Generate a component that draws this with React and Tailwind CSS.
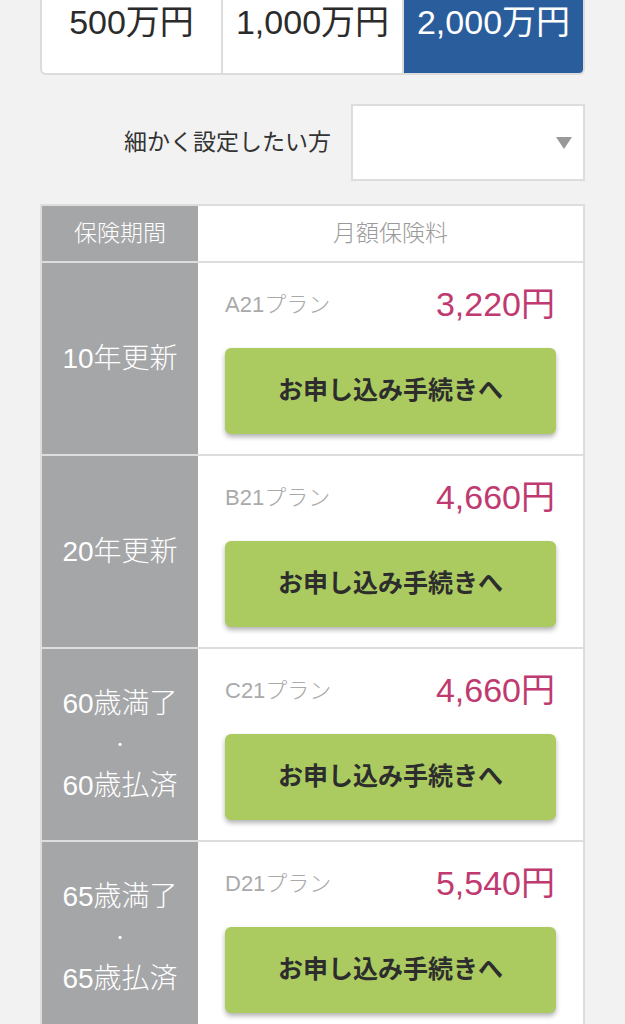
const FONT = "font-['Liberation_Sans','Noto_Sans_CJK_JP',sans-serif]"

const AMOUNTS = [
  { label: '500万円', active: false },
  { label: '1,000万円', active: false },
  { label: '2,000万円', active: true },
]

const PLANS = [
  { term: ['10年更新'], plan: 'A21プラン', price: '3,220円' },
  { term: ['20年更新'], plan: 'B21プラン', price: '4,660円' },
  { term: ['60歳満了', '・', '60歳払済'], plan: 'C21プラン', price: '4,660円' },
  { term: ['65歳満了', '・', '65歳払済'], plan: 'D21プラン', price: '5,540円' },
]

function PlanRow({ row }) {
  return (
    <div className="flex h-[193px] border-t-2 border-[#dddddd]">
      <div className="w-[156px] shrink-0 bg-[#a5a6a8] flex flex-col items-center justify-center text-white text-[28px] leading-[41px] font-light">
        {row.term.map((t, i) => (
          <span key={i} className={t === '・' ? 'text-[16px]' : ''}>{t}</span>
        ))}
      </div>
      <div className="flex-1 bg-white px-[27px] pt-[22px]">
        <div className="flex items-center justify-between h-[38px]">
          <span className="text-[22px] font-light text-[#aaaaaa]">{row.plan}</span>
          <span className="text-[34px] text-[#bf3a70] pr-[1px]">{row.price}</span>
        </div>
        <button className="mt-[25px] w-full h-[86px] rounded-[6px] bg-[#abcb61] shadow-[0_3px_5px_rgba(0,0,0,0.3)] text-[25px] font-bold text-[#2d2d2d]">
          お申し込み手続きへ
        </button>
      </div>
    </div>
  )
}

export default function App() {
  return (
    <div className={`min-h-[1024px] bg-[#f2f2f2] ${FONT}`}>
      <div className="mx-[40px]">
        {/* Amount selector */}
        <div className="flex h-[75px] rounded-b-[6px] overflow-hidden border-x-2 border-b-2 border-[#dcdcdc] bg-white">
          {AMOUNTS.map((a, i) => (
            <div
              key={a.label}
              className={`flex-1 flex justify-center pt-[1px] text-[34px] leading-[42px] ${i > 0 ? 'border-l-2 border-[#dcdcdc]' : ''} ${a.active ? 'bg-[#2a5d9c] text-white' : 'text-[#2b2b2b]'}`}
            >
              {a.label}
            </div>
          ))}
        </div>

        {/* Fine settings */}
        <div className="flex items-center justify-end mt-[29px] gap-[20px]">
          <span className="text-[23px] text-[#333333]">細かく設定したい方</span>
          <div className="w-[234px] h-[77px] bg-white border-2 border-[#dddddd] flex items-center justify-end pr-[10px]">
            <svg width="18" height="14" viewBox="0 0 18 14">
              <path d="M1 1h16L9 13z" fill="#999999" />
            </svg>
          </div>
        </div>

        {/* Plans table */}
        <div className="mt-[23px] border-x-2 border-t-2 border-[#dddddd]">
          <div className="flex h-[55px]">
            <div className="w-[156px] shrink-0 bg-[#a5a6a8] flex items-center justify-center text-[23px] font-light text-white">保険期間</div>
            <div className="flex-1 bg-white flex items-center justify-center text-[23px] font-light text-[#9a9a9a]">月額保険料</div>
          </div>
          {PLANS.map(row => (
            <PlanRow key={row.plan} row={row} />
          ))}
        </div>
      </div>
    </div>
  )
}
